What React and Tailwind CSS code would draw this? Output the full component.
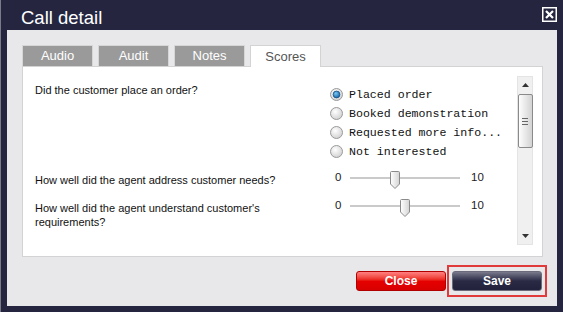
import React from "react";

function Radio({ checked }) {
  return (
    <svg width="13" height="13" viewBox="0 0 13 13" className="shrink-0">
      <defs>
        <radialGradient id={checked ? "rgc" : "rgu"} cx="0.4" cy="0.35" r="0.7">
          <stop offset="0" stopColor="#ffffff" />
          <stop offset="1" stopColor="#cfcfcf" />
        </radialGradient>
        <radialGradient id="dot" cx="0.4" cy="0.35" r="0.7">
          <stop offset="0" stopColor="#7cc8f2" />
          <stop offset="1" stopColor="#0b5fa5" />
        </radialGradient>
      </defs>
      <circle cx="6.5" cy="6.5" r="6" fill={`url(#${checked ? "rgc" : "rgu"})`} stroke="#9a9a9a" />
      {checked && <circle cx="6.5" cy="6.5" r="3.4" fill="url(#dot)" stroke="#1a4f80" strokeWidth="0.8" />}
    </svg>
  );
}

function Thumb() {
  return (
    <svg width="10" height="18" viewBox="0 0 10 18">
      <defs>
        <linearGradient id="thg" x1="0" y1="0" x2="1" y2="0">
          <stop offset="0" stopColor="#ffffff" />
          <stop offset="1" stopColor="#d4d4d4" />
        </linearGradient>
      </defs>
      <path d="M1.5 0.5 H8.5 Q9.5 0.5 9.5 1.5 V13 L5 17.5 L0.5 13 V1.5 Q0.5 0.5 1.5 0.5 Z" fill="url(#thg)" stroke="#8a8a8a" />
    </svg>
  );
}

function Slider({ left }) {
  return (
    <div className="flex items-start h-[18px]">
      <span className="ml-[5px] w-[8px] leading-[13px] text-[11.5px] text-[#222]">0</span>
      <div className="relative ml-[7px] w-[110px] h-[18px]">
        <div className="absolute left-0 right-0 top-[6px] h-[2px] bg-[#cacaca]" />
        <div className="absolute top-0" style={{ left }}>
          <Thumb />
        </div>
      </div>
      <span className="ml-[11px] leading-[13px] text-[11.5px] text-[#222]">10</span>
    </div>
  );
}

function Tab({ label, active }) {
  return (
    <div
      className={
        "w-[71px] h-[21px] flex items-center justify-center text-[13px] border border-b-0 " +
        (active
          ? "bg-white text-[#555] border-[#d3d3d3] h-[22px] -mb-px"
          : "bg-[#9a9a9a] text-white border-[#d6d6d6]")
      }
    >
      {label}
    </div>
  );
}

export default function App() {
  const radios = ["Placed order", "Booked demonstration", "Requested more info...", "Not interested"];
  return (
    <div className="w-[563px] h-[312px] bg-[#25253f] border-l border-l-[#7a7a88] flex flex-col font-['Liberation_Sans',Arial,sans-serif]">
      <div className="h-[30px] flex justify-between pl-[20px] pr-[6px] shrink-0">
        <div className="pt-[8px] leading-[20px] text-[18.5px] text-white">Call detail</div>
        <svg width="15" height="15" viewBox="0 0 15 15" className="mt-[7px]">
          <rect x="0.75" y="0.75" width="13.5" height="13.5" fill="none" stroke="#ffffff" strokeWidth="1.5" />
          <path d="M4 4 L11 11 M11 4 L4 11" stroke="#ffffff" strokeWidth="2.2" />
        </svg>
      </div>
      <div className="ml-[6px] w-[550px] h-[276px] bg-[#e8e8ea] pl-[15px] pt-[15px] flex flex-col shrink-0">
        <div className="flex items-start gap-[5px] h-[21px] relative z-10">
          <Tab label="Audio" />
          <Tab label="Audit" />
          <Tab label="Notes" />
          <Tab label="Scores" active />
        </div>
        <div className="w-[521px] h-[191px] bg-white border border-[#d3d3d3] flex">
          <div className="flex-1 pl-[12px] pt-[16px] text-[11px] text-[#111] flex flex-col">
            <div className="flex">
              <div className="w-[295px] leading-[14px]">Did the customer place an order?</div>
              <div className="mt-[2px] flex flex-col">
                {radios.map((r, i) => (
                  <div key={r} className="h-[19px] flex items-center gap-[6px]">
                    <Radio checked={i === 0} />
                    <span className="font-['Liberation_Mono',monospace] text-[11.6px] text-[#111]">{r}</span>
                  </div>
                ))}
              </div>
            </div>
            <div className="flex mt-[10px]">
              <div className="w-[295px] pt-[2px] leading-[14px]">How well did the agent address customer needs?</div>
              <Slider left={40} />
            </div>
            <div className="flex mt-[10px]">
              <div className="w-[295px] pt-[2px] leading-[14px]">
                How well did the agent understand customer's
                <br />
                requirements?
              </div>
              <Slider left={50} />
            </div>
          </div>
          <div className="w-[16px] h-[169px] mt-[9px] mr-[9px] bg-[#f0f0f0] border border-[#e4e4e4] flex flex-col items-center relative">
            <svg width="7" height="4" viewBox="0 0 7 4" className="mt-[6px]">
              <path d="M0 4 L3.5 0 L7 4 Z" fill="#333" />
            </svg>
            <div className="mt-[7px] w-[15px] h-[54px] rounded-[2px] border border-[#8a8a8a] bg-gradient-to-r from-[#fdfdfd] to-[#d3d3d3] flex flex-col items-center justify-center gap-[2px]">
              <div className="w-[6px] h-px bg-[#666]" />
              <div className="w-[6px] h-px bg-[#666]" />
              <div className="w-[6px] h-px bg-[#666]" />
            </div>
            <div className="flex-1" />
            <svg width="7" height="4" viewBox="0 0 7 4" className="mb-[6px]">
              <path d="M0 0 L3.5 4 L7 0 Z" fill="#333" />
            </svg>
          </div>
        </div>
        <div className="flex justify-end items-center mt-[8px] pr-[10px]">
          <button className="w-[90px] h-[20px] rounded-[3px] border border-[#b00000] bg-gradient-to-b from-[#ff8080] via-[#e60000] to-[#d80000] text-white font-bold text-[12px] leading-none mr-[1px]">
            Close
          </button>
          <div className="w-[100px] h-[32px] border-2 border-[#e03a3a] flex items-center justify-center">
            <button className="w-[90px] h-[20px] rounded-[3px] border border-[#6a6a7a] bg-gradient-to-b from-[#7a7a8c] via-[#2a2a45] to-[#22223c] text-white font-bold text-[12px] leading-none">
              Save
            </button>
          </div>
        </div>
      </div>
    </div>
  );
}
